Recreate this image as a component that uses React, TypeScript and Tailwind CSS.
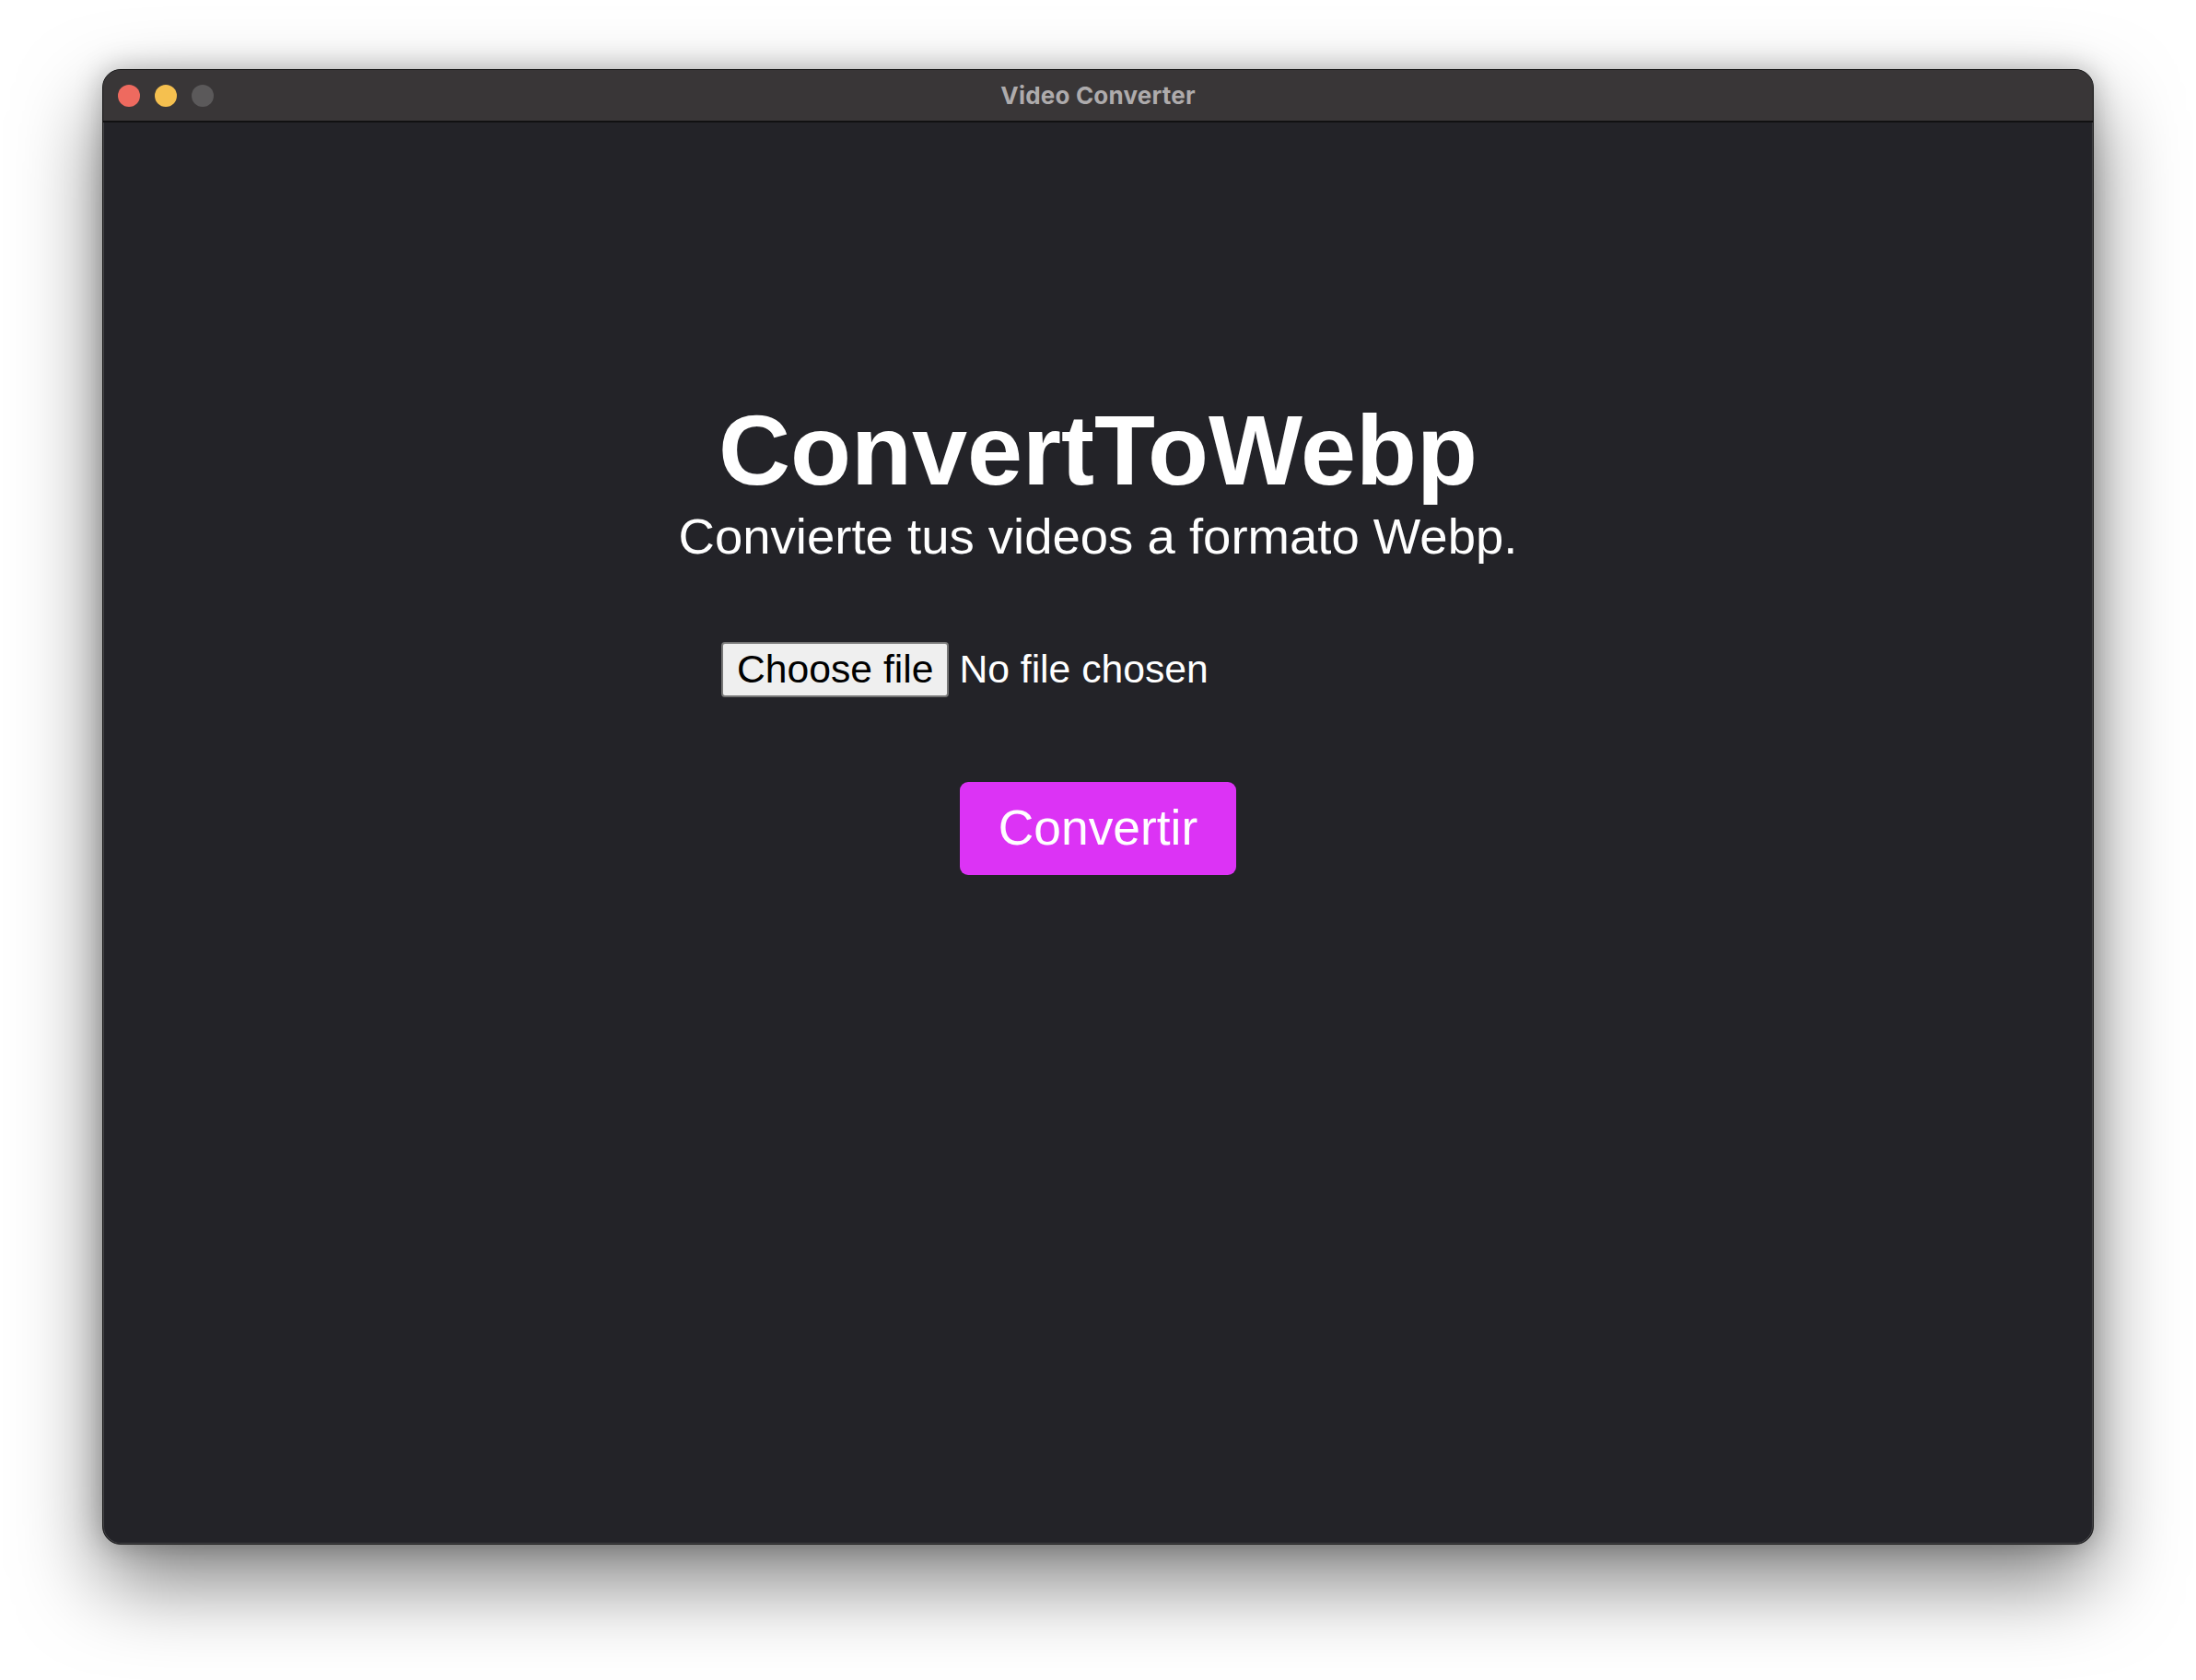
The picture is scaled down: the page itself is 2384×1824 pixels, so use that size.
import React from "react";

export default function App() {
  return (
    <div className="w-[2384px] h-[1824px] bg-white overflow-hidden pt-[75px] px-[111px]">
      <div
        className="relative w-[2162px] h-[1602px] rounded-[20px] border border-[#141414] bg-[#232328] overflow-hidden flex flex-col shadow-[0_40px_90px_rgba(0,0,0,0.5),0_0_30px_rgba(0,0,0,0.25)]"
      >
        <div className="pointer-events-none absolute inset-0 rounded-[19px] shadow-[inset_0_0_0_1px_rgba(255,255,255,0.16)]" />
        <div className="relative h-[57px] shrink-0 bg-[#393637] border-b-2 border-[#111112] flex items-center px-[16px]">
          <div className="flex items-center gap-[16px]">
            <div className="w-[24px] h-[24px] rounded-full bg-[#ee6a5f]" />
            <div className="w-[24px] h-[24px] rounded-full bg-[#f5c04f]" />
            <div className="w-[24px] h-[24px] rounded-full bg-[#5b595a]" />
          </div>
          <div className="absolute inset-0 flex items-center justify-center">
            <span
              className="text-[26px] font-bold text-[#aeabac] tracking-[0.2px]"
              style={{ fontFamily: "Inter, 'Liberation Sans', sans-serif" }}
            >
              Video Converter
            </span>
          </div>
        </div>
        <div
          className="flex-1 flex flex-col items-center pt-[302px] text-white"
          style={{ fontFamily: "'Liberation Sans', Arial, sans-serif" }}
        >
          <h1 className="text-[108px] font-bold leading-none">ConvertToWebp</h1>
          <p className="mt-[13px] text-[54.5px] leading-none">
            Convierte tus videos a formato Webp.
          </p>
          <div className="mt-[86px] w-[818px] flex items-center">
            <div className="h-[60px] px-[15px] flex items-center bg-[#efefef] border-2 border-[#767676] rounded-[4px] text-black text-[42.67px] leading-none">
              Choose file
            </div>
            <span className="ml-[11px] text-[42.67px] leading-none text-white">
              No file chosen
            </span>
          </div>
          <button className="mt-[92px] w-[300px] h-[101px] rounded-[9px] bg-[#dc33f5] text-white text-[53.33px] leading-none flex items-center justify-center">
            Convertir
          </button>
        </div>
      </div>
    </div>
  );
}
